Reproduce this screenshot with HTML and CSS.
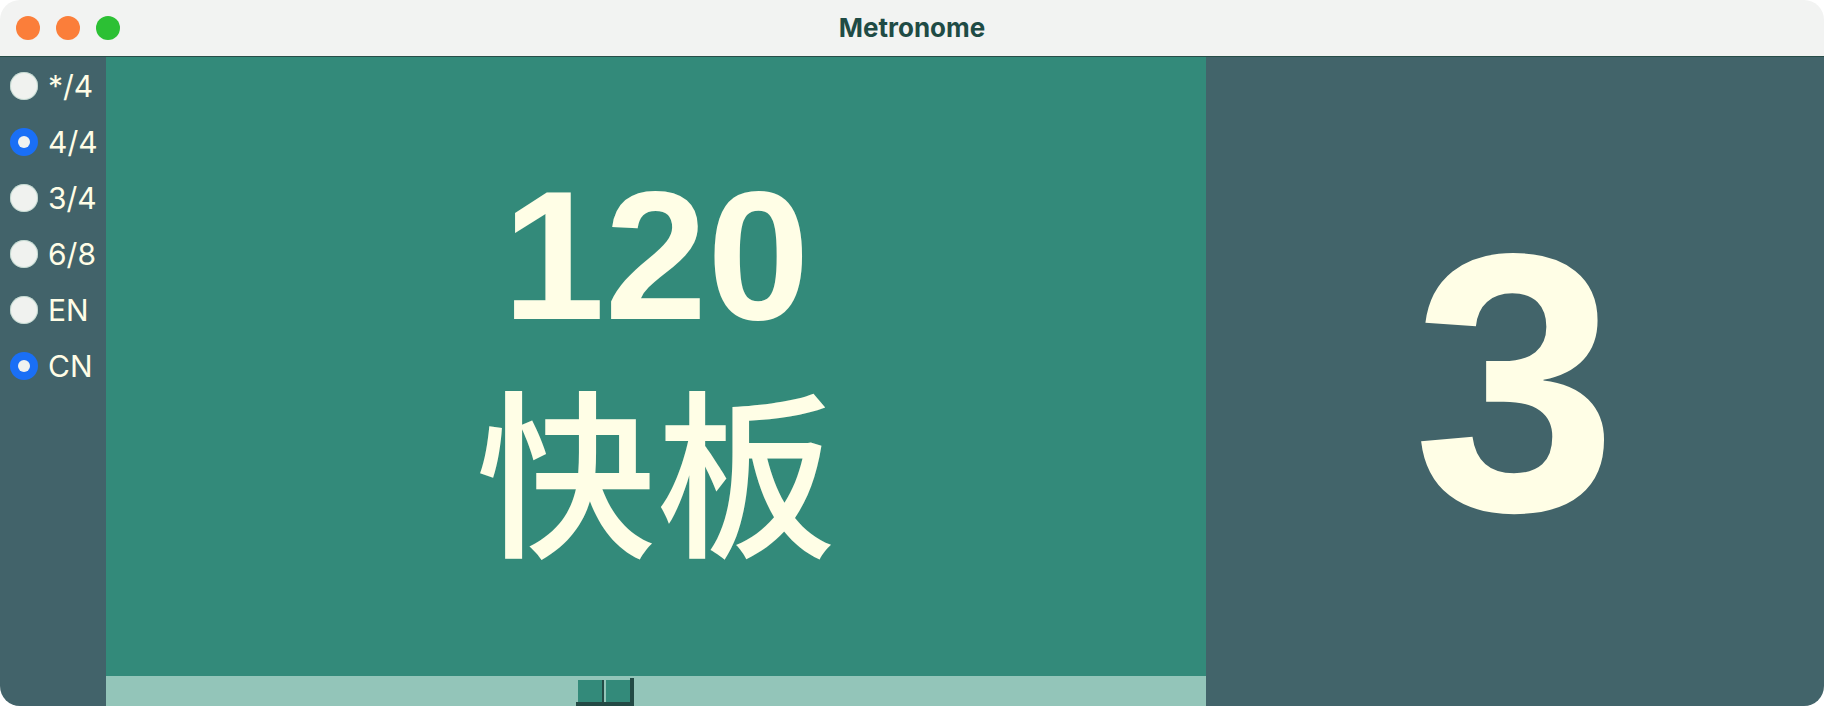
FILE: index.html
```html
<!DOCTYPE html>
<html lang="zh">
<head>
<meta charset="utf-8">
<title>Metronome</title>
<link rel="stylesheet" href="styles.css">
</head>
<body>
<div class="window">
  <header class="titlebar">
    <div class="lights">
      <span class="light orange"></span>
      <span class="light orange"></span>
      <span class="light green"></span>
    </div>
    <div class="title">Metronome</div>
  </header>
  <div class="content">
    <aside class="sidebar">
      <div class="option"><span class="radio"></span><span class="label">*/4</span></div>
      <div class="option"><span class="radio on"></span><span class="label">4/4</span></div>
      <div class="option"><span class="radio"></span><span class="label">3/4</span></div>
      <div class="option"><span class="radio"></span><span class="label">6/8</span></div>
      <div class="option"><span class="radio"></span><span class="label">EN</span></div>
      <div class="option"><span class="radio on"></span><span class="label">CN</span></div>
    </aside>
    <section class="center">
      <div class="tempo">
        <div class="bpm">120</div>
        <div class="name">快板</div>
      </div>
      <div class="bar">
        <div class="beats">
          <span class="sq first"></span>
          <span class="sq"></span>
          <span class="edge"></span>
        </div>
      </div>
    </section>
    <section class="count">
      <div class="beat">3</div>
    </section>
  </div>
</div>
</body>
</html>
```
FILE: styles.css
```css
html, body {
  margin: 0;
  padding: 0;
  background: #ffffff;
}
.window {
  width: 1824px;
  height: 706px;
  border-radius: 20px;
  overflow: hidden;
  display: flex;
  flex-direction: column;
  font-family: Inter, "Liberation Sans", Arial, sans-serif;
}
.titlebar {
  height: 56px;
  flex: none;
  background: #f2f3f2;
  border-bottom: 1px solid #284d48;
  display: flex;
  align-items: center;
  justify-content: center;
  position: relative;
}
.lights {
  position: absolute;
  left: 16px;
  top: 16px;
  display: flex;
  gap: 16px;
}
.light {
  width: 24px;
  height: 24px;
  border-radius: 50%;
  display: block;
}
.orange { background: #fb7e3a; }
.green { background: #2cc034; }
.title {
  font-weight: bold;
  font-size: 26px;
  color: #1f4b45;
  line-height: 54px;
}
.content {
  flex: 1;
  display: flex;
  min-height: 0;
}
.sidebar {
  width: 106px;
  flex: none;
  background: #42636a;
  padding-top: 1px;
  box-sizing: border-box;
}
.option {
  height: 56px;
  display: flex;
  align-items: center;
  padding-left: 10px;
  gap: 10px;
}
.radio {
  width: 28px;
  height: 28px;
  border-radius: 50%;
  background: #f0f2ef;
  box-shadow: 0 0 0 1px rgba(160, 200, 185, 0.5) inset;
  box-sizing: border-box;
  display: flex;
  align-items: center;
  justify-content: center;
  flex: none;
}
.radio.on {
  background: #1a6ff6;
  box-shadow: none;
}
.radio.on::after {
  content: "";
  width: 12px;
  height: 12px;
  border-radius: 50%;
  background: #f0f2f0;
}
.label {
  font-size: 30px;
  color: #fffde6;
  line-height: 1;
}
.center {
  width: 1100px;
  flex: none;
  display: flex;
  flex-direction: column;
  background: #338a7a;
}
.tempo {
  flex: 1;
  display: flex;
  flex-direction: column;
  align-items: center;
  justify-content: center;
  color: #fffee6;
  padding-bottom: 15px;
}
.bpm {
  font-family: "Liberation Sans", Arial, sans-serif;
  font-weight: bold;
  font-size: 184px;
  line-height: 1;
}
.name {
  font-family: "Noto Sans CJK SC", "Noto Sans CJK JP", sans-serif;
  font-weight: 500;
  font-size: 180px;
  line-height: 1;
  margin-top: 28px;
}
.bar {
  height: 30px;
  flex: none;
  background: #93c5b9;
  display: flex;
  align-items: flex-end;
  padding-left: 470px;
}
.beats {
  display: flex;
  align-items: flex-start;
  height: 24px;
  padding-left: 2px;
  border-bottom: 4px solid #234a45;
}
.sq {
  width: 24px;
  height: 22px;
  margin-top: 2px;
  background: #338a7a;
  display: block;
}
.sq.first {
  border-right: 2px solid #234a45;
  margin-right: 2px;
}
.edge {
  width: 4px;
  height: 24px;
  background: #234a45;
  display: block;
}
.count {
  flex: 1;
  background: #42646a;
  display: flex;
  align-items: center;
  justify-content: center;
  padding-top: 2px;
  box-sizing: border-box;
}
.beat {
  font-family: "Liberation Sans", Arial, sans-serif;
  font-weight: bold;
  font-size: 368px;
  line-height: 1;
  color: #fffee6;
}
```
